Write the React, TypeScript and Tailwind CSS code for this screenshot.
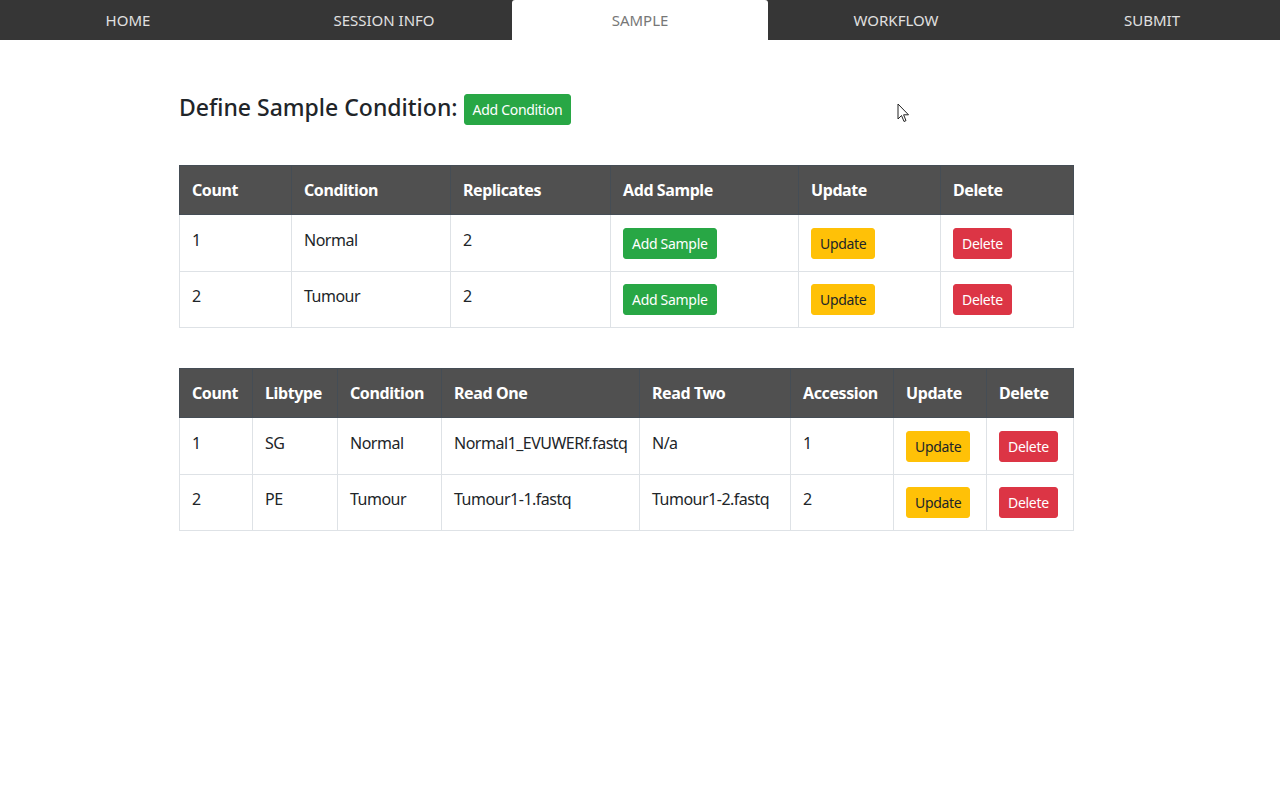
import React from "react";

const tabs = ["HOME", "SESSION INFO", "SAMPLE", "WORKFLOW", "SUBMIT"];

const conditions = [
  { count: 1, condition: "Normal", replicates: 2 },
  { count: 2, condition: "Tumour", replicates: 2 },
];

const samples = [
  { count: 1, libtype: "SG", condition: "Normal", readOne: "Normal1_EVUWERf.fastq", readTwo: "N/a", accession: 1 },
  { count: 2, libtype: "PE", condition: "Tumour", readOne: "Tumour1-1.fastq", readTwo: "Tumour1-2.fastq", accession: 2 },
];

const th = "border border-[#454d55] bg-[#505050] px-3 py-3 text-left align-bottom font-bold tracking-[-0.4px] text-white";
const td = "border border-[#dee2e6] px-3 pt-[12.5px] pb-3 align-top tracking-[-0.5px]";

function Btn({ kind, children }: { kind: "green" | "yellow" | "red"; children: React.ReactNode }) {
  const colors = {
    green: "bg-[#28a745] border-[#28a745] text-white",
    yellow: "bg-[#ffc107] border-[#ffc107] text-[#212529]",
    red: "bg-[#dc3545] border-[#dc3545] text-white",
  };
  return (
    <button className={`h-[31px] rounded-[3px] border px-2 text-[14px] leading-[21px] tracking-[-0.3px] ${colors[kind]}`}>
      {children}
    </button>
  );
}

export default function App() {
  return (
    <div className="relative min-h-[800px] bg-white text-[16px] leading-6 text-[#212529]" style={{ fontFamily: '"Noto Sans", "Open Sans", sans-serif' }}>
      <nav className="grid h-10 grid-cols-5 bg-[#363636]">
        {tabs.map((t) => (
          <div
            key={t}
            className={`flex items-center justify-center text-[15px] ${t === "SAMPLE" ? "rounded-t-[3px] bg-white text-[#777]" : "text-[#e0e0e0]"}`}
          >
            {t}
          </div>
        ))}
      </nav>

      <main className="ml-[179px] w-[894px] pt-[54px]">
        <div className="flex h-[31px] items-center gap-[6px]">
          <h4 className="pb-[5px] text-[23px] font-medium leading-[24px] text-[#212529]">Define Sample Condition:</h4>
          <Btn kind="green">Add Condition</Btn>
        </div>

        <table className="mt-10 w-[894px] table-fixed border-collapse">
          <colgroup>
            <col className="w-[112px]" />
            <col className="w-[159px]" />
            <col className="w-[160px]" />
            <col className="w-[188px]" />
            <col className="w-[142px]" />
            <col className="w-[133px]" />
          </colgroup>
          <thead>
            <tr>
              <th className={th}>Count</th>
              <th className={th}>Condition</th>
              <th className={th}>Replicates</th>
              <th className={th}>Add Sample</th>
              <th className={th}>Update</th>
              <th className={th}>Delete</th>
            </tr>
          </thead>
          <tbody>
            {conditions.map((c) => (
              <tr key={c.count}>
                <td className={td}>{c.count}</td>
                <td className={td}>{c.condition}</td>
                <td className={td}>{c.replicates}</td>
                <td className={td}><Btn kind="green">Add Sample</Btn></td>
                <td className={td}><Btn kind="yellow">Update</Btn></td>
                <td className={td}><Btn kind="red">Delete</Btn></td>
              </tr>
            ))}
          </tbody>
        </table>

        <table className="mt-10 w-[894px] table-fixed border-collapse">
          <colgroup>
            <col className="w-[73px]" />
            <col className="w-[85px]" />
            <col className="w-[104px]" />
            <col className="w-[198px]" />
            <col className="w-[151px]" />
            <col className="w-[103px]" />
            <col className="w-[93px]" />
            <col className="w-[87px]" />
          </colgroup>
          <thead>
            <tr>
              <th className={th}>Count</th>
              <th className={th}>Libtype</th>
              <th className={th}>Condition</th>
              <th className={th}>Read One</th>
              <th className={th}>Read Two</th>
              <th className={th}>Accession</th>
              <th className={th}>Update</th>
              <th className={th}>Delete</th>
            </tr>
          </thead>
          <tbody>
            {samples.map((s) => (
              <tr key={s.count}>
                <td className={td}>{s.count}</td>
                <td className={td}>{s.libtype}</td>
                <td className={td}>{s.condition}</td>
                <td className={`${td} whitespace-nowrap`}>{s.readOne}</td>
                <td className={`${td} whitespace-nowrap`}>{s.readTwo}</td>
                <td className={td}>{s.accession}</td>
                <td className={td}><Btn kind="yellow">Update</Btn></td>
                <td className={td}><Btn kind="red">Delete</Btn></td>
              </tr>
            ))}
          </tbody>
        </table>
      </main>

      <svg className="absolute left-[897px] top-[103px]" width="13" height="20" viewBox="0 0 13 20">
        <path d="M1 1 L1 16 L4.5 12.5 L7 18.5 L9 17.6 L6.6 11.8 L11.5 11.8 Z" fill="white" stroke="#222" strokeWidth="1" strokeLinejoin="round" />
      </svg>
    </div>
  );
}
